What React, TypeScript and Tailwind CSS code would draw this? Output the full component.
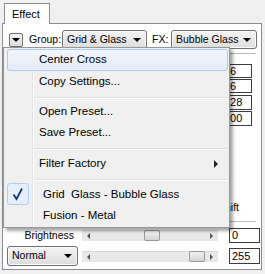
const font = "font-['Liberation_Sans',Arial,sans-serif]";

function Combo({ label, className }: { label: string; className: string }) {
  return (
    <div
      className={`flex items-center rounded-[3px] border border-[#707070] bg-gradient-to-b from-[#f3f3f3] to-[#dddddd] pl-[4px] text-[10.5px] text-black shadow-[inset_0_0_0_1px_#fbfbfb] ${className}`}
    >
      <span className="whitespace-nowrap">{label}</span>
      <span className="ml-auto mr-[5px] h-0 w-0 border-x-[4px] border-t-[4px] border-x-transparent border-t-black" />
    </div>
  );
}

function Slider({ thumb }: { thumb: number }) {
  return (
    <div className="relative ml-[4px] h-[11px] w-[136px] border-t border-[#d9d9d9] bg-[#e8e8e8]">
      <span className="absolute left-[5px] top-[2px] h-0 w-0 border-y-[3px] border-r-[3px] border-y-transparent border-r-[#555]" />
      <span className="absolute right-[5px] top-[2px] h-0 w-0 border-y-[3px] border-l-[3px] border-y-transparent border-l-[#555]" />
      <div
        className="absolute top-[-1px] h-[11px] w-[16px] rounded-[2px] border border-[#979797] bg-gradient-to-b from-[#f2f2f2] to-[#d4d4d4]"
        style={{ left: thumb }}
      />
    </div>
  );
}

function Box({ value, className }: { value: string; className: string }) {
  return (
    <div className={`flex items-center border border-[#3c3c3c] bg-white pl-[2px] text-[11px] leading-none text-black ${className}`}>
      {value}
    </div>
  );
}

function Item({
  label,
  active,
  checked,
  submenu,
  indent,
  tall,
}: {
  label: string;
  active?: boolean;
  checked?: boolean;
  submenu?: boolean;
  indent?: boolean;
  tall?: boolean;
}) {
  return (
    <div
      className={`relative ml-[3px] mr-[1px] flex items-center whitespace-pre rounded-[3px] border text-[11.5px] text-black ${
        tall ? "h-[22px]" : "h-[21px]"
      } ${indent ? "pl-[35px]" : "pl-[31px]"} ${
        active ? "border-[#aecbf0] bg-gradient-to-b from-[#f2f6fc] to-[#e3ecf8]" : "border-transparent"
      }`}
    >
      {checked && (
        <div className="absolute left-[-1px] top-[-2px] h-[22px] w-[22px] rounded-[3px] border border-[#aecff7] bg-[#e6eefa]">
          <svg width="20" height="20" viewBox="0 0 20 20" className="absolute left-0 top-0">
            <path d="M5.5 10.5 L8.5 15 L14 4.5" fill="none" stroke="#12307e" strokeWidth="1.7" />
          </svg>
        </div>
      )}
      {label}
      {submenu && (
        <span className="absolute right-[9px] top-[6px] h-0 w-0 border-y-[4px] border-l-[4px] border-y-transparent border-l-[#222]" />
      )}
    </div>
  );
}

function Sep({ h }: { h: string }) {
  return (
    <div className={`ml-[30px] mr-[1px] pt-[5px] ${h}`}>
      <div className="border-t border-b border-t-[#e0e0e0] border-b-white" />
    </div>
  );
}

export default function App() {
  return (
    <div className={`relative h-[274px] w-[265px] overflow-hidden bg-[#f0f0f0] ${font}`}>
      <div className="pl-[2px] pt-[3px]">
        <div className="flex pl-[2px]">
          <div className="relative z-10 -mb-px flex h-[21px] w-[46px] items-center border border-b-0 border-[#898c95] bg-white pl-[7px] text-[11px] text-black">
            Effect
          </div>
        </div>

        <div className="flex h-[247px] w-[260px] flex-col border border-[#898c95] bg-white">
          <div className="mt-[6px] flex h-[19px] items-center pl-[6px] text-[10.5px] text-black">
            <div className="flex h-[14px] w-[14px] items-center justify-center rounded-[2px] border border-[#707070] bg-gradient-to-b from-[#f4f4f4] to-[#dcdcdc]">
              <span className="h-0 w-0 border-x-[4px] border-t-[4px] border-x-transparent border-t-black" />
            </div>
            <span className="ml-[6px] w-[33px]">Group:</span>
            <Combo label="Grid & Glass" className="h-[19px] w-[85px]" />
            <span className="ml-[5px] w-[19px]">FX:</span>
            <Combo label="Bubble Glass" className="h-[19px] w-[86px]" />
          </div>

          <div className="flex h-[179px] justify-end">
            <div className="mr-[5px] flex w-[42px] flex-col">
              <div className="mt-[4px] h-px bg-[#b9b9b9]" />
              <Box value="16" className="ml-[7px] mt-[10px] h-[14px] w-[31px]" />
              <Box value="16" className="ml-[7px] mt-[1px] h-[14px] w-[31px]" />
              <Box value="128" className="ml-[7px] mt-[2px] h-[15px] w-[31px]" />
              <Box value="100" className="ml-[7px] mt-[1px] h-[15px] w-[31px]" />
              <div className="ml-[4px] mt-[75px] h-[12px] text-[10.5px] leading-[12px] text-black">Shift</div>
              <div className="mt-[8px] h-px bg-[#b9b9b9]" />
            </div>
          </div>

          <div className="flex h-[15px] items-center pl-[4px]">
            <div className="w-[71px] pr-[4px] text-right text-[10.5px] text-black">Brightness</div>
            <Slider thumb={62} />
            <Box value="0" className="ml-[11px] h-[15px] w-[31px]" />
          </div>
          <div className="mt-[3px] flex h-[20px] items-center pl-[4px]">
            <Combo label="Normal" className="h-[20px] w-[71px]" />
            <Slider thumb={107} />
            <Box value="255" className="ml-[11px] h-[16px] w-[31px]" />
          </div>
        </div>
      </div>

      <div className="absolute left-[3px] top-[47px] z-20 w-[227px] border border-[#979797] bg-[#f0f0f0] py-px shadow-[3px_3px_3px_rgba(0,0,0,0.35)]">
        <div className="absolute bottom-0 left-[28px] top-0 w-px bg-[#e2e3e3]" />
        <div className="absolute bottom-0 left-[29px] top-0 w-px bg-white" />
        <Item label="Center Cross" active tall />
        <Item label="Copy Settings..." />
        <Sep h="h-[9px]" />
        <Item label="Open Preset..." />
        <Item label="Save Preset..." />
        <Sep h="h-[10px]" />
        <Item label="Filter Factory" submenu />
        <Sep h="h-[10px]" />
        <Item label="Grid  Glass - Bubble Glass" checked indent />
        <Item label="Fusion - Metal" indent />
      </div>
    </div>
  );
}
